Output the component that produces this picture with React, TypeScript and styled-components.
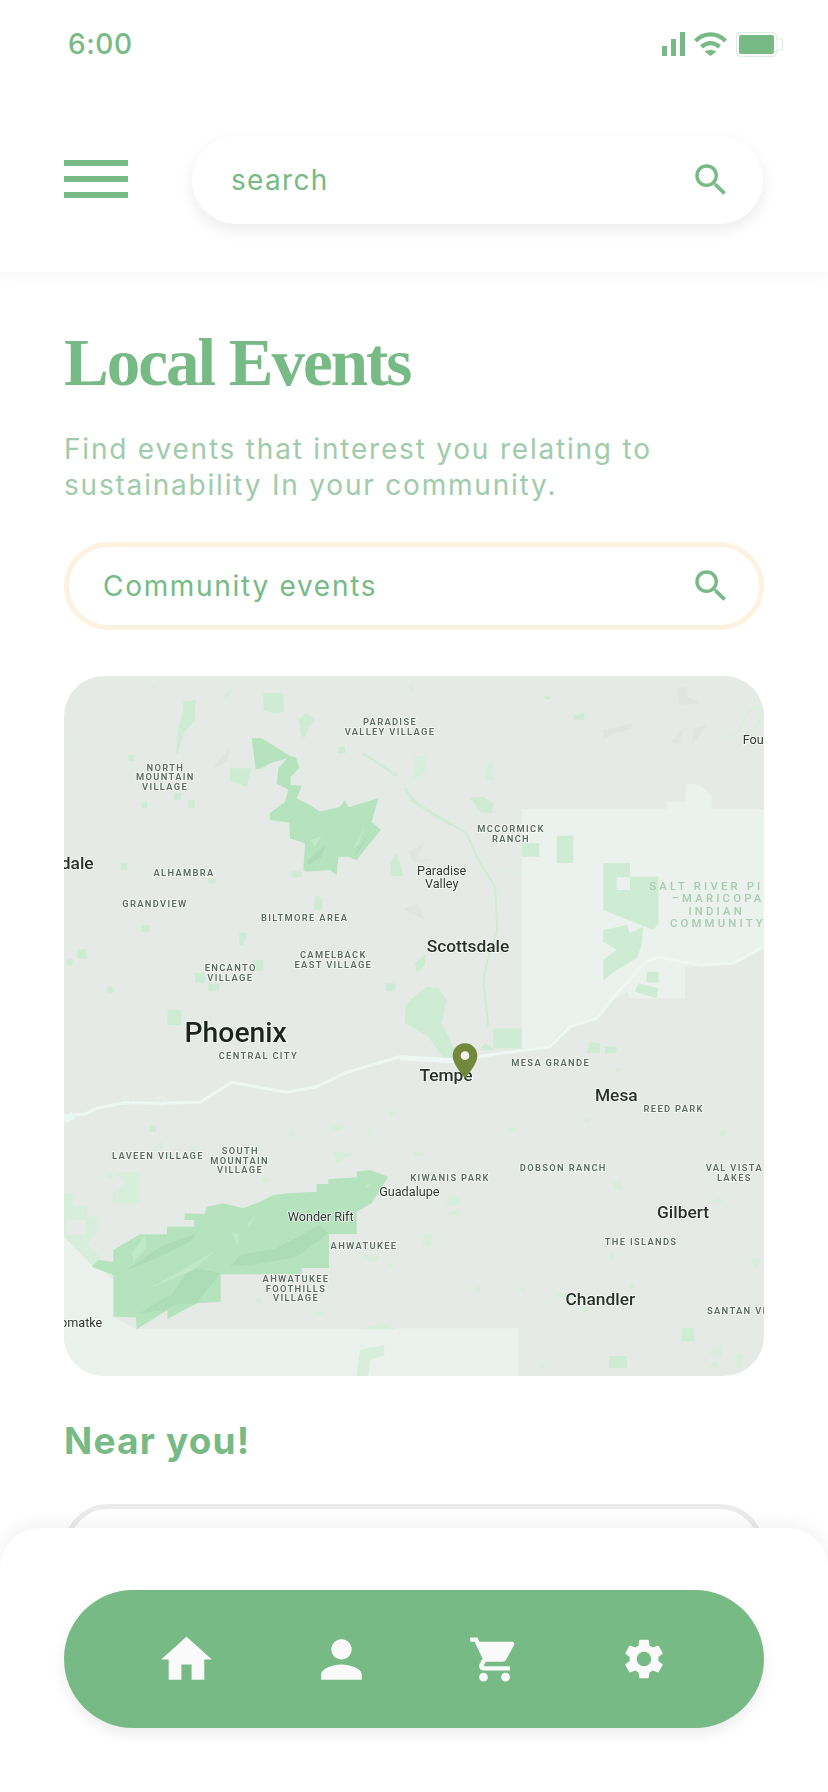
import React from "react";
import styled, { createGlobalStyle } from "styled-components";
import { MdHome, MdPerson, MdSearch, MdSettings, MdShoppingCart } from "react-icons/md";

const GREEN = "#77ba85";
const UI_FONT = `"Inter", "Open Sans", "Liberation Sans", sans-serif`;

const Global = createGlobalStyle`
  html, body { margin: 0; padding: 0; background: #fff; }
  * { box-sizing: border-box; }
`;

const Page = styled.div`
  position: relative;
  width: 828px;
  height: 1792px;
  overflow: hidden;
  background: #fff;
  font-family: ${UI_FONT};
  color: ${GREEN};
`;

const Header = styled.header`
  height: 272px;
  background: #fff;
  box-shadow: 0 2px 14px rgba(0, 0, 0, 0.05);
`;

const StatusBar = styled.div`
  height: 88px;
  padding: 0 45px 0 68px;
  display: flex;
  align-items: center;
  justify-content: space-between;
`;

const Clock = styled.span`
  font-size: 28px;
  font-weight: 500;
  letter-spacing: 0.6px;
  line-height: 1;
`;

const StatusIcons = styled.div`
  display: flex;
  align-items: center;
  gap: 9px;
`;

const Toolbar = styled.div`
  margin-top: 48px;
  padding: 0 65px 0 64px;
  display: flex;
  align-items: center;
  gap: 64px;
`;

const Burger = styled.div`
  width: 64px;
  margin-bottom: 2px;
  display: flex;
  flex-direction: column;
  gap: 10px;
  flex: none;
`;

const BurgerBar = styled.span`
  display: block;
  height: 6px;
  background: ${GREEN};
`;

const HeaderSearch = styled.div`
  flex: 1;
  height: 88px;
  border-radius: 44px;
  background: #fff;
  padding: 0 31px 0 39px;
  display: flex;
  align-items: center;
  justify-content: space-between;
  box-shadow: 0 6px 16px rgba(0, 0, 0, 0.08);
`;

const SearchLabel = styled.span<{ $spacing: number }>`
  font-size: 28px;
  letter-spacing: ${(p) => p.$spacing}px;
  line-height: 1;
`;

const Content = styled.main`
  padding: 46px 64px 0;
`;

const Title = styled.h1`
  margin: 0;
  font-family: "Liberation Serif", "Noto Serif", serif;
  font-size: 67px;
  font-weight: 700;
  line-height: 88px;
  letter-spacing: -2px;
`;

const Lead = styled.p`
  margin: 25px 0 0;
  font-size: 28px;
  line-height: 36px;
  letter-spacing: 1.8px;
  white-space: nowrap;
  color: #a0cbaa;
`;

const FieldBox = styled.div`
  margin-top: 39px;
  height: 88px;
  border-radius: 44px;
  border: 5px solid #fdf1e0;
  background: #fff;
  padding: 0 27px 0 34px;
  display: flex;
  align-items: center;
  justify-content: space-between;
`;

const MapFrame = styled.div`
  margin-top: 46px;
  width: 700px;
  height: 700px;
  border-radius: 40px;
  overflow: hidden;
  background: #e6eae6;
`;

const MapSvg = styled.svg`
  display: block;
  width: 700px;
  height: 700px;
  filter: blur(0.35px);
`;

const Place = styled.text<{ $size: number; $weight: number; $fill: string; $spacing: number; $halo: boolean }>`
  font-family: "Roboto", "Liberation Sans", sans-serif;
  font-size: ${(p) => p.$size}px;
  font-weight: ${(p) => p.$weight};
  fill: ${(p) => p.$fill};
  letter-spacing: ${(p) => p.$spacing}px;
  stroke: ${(p) => (p.$halo ? "rgba(255,255,255,0.75)" : "none")};
  stroke-width: 5px;
  paint-order: stroke;
`;

const Subhead = styled.h2`
  margin: 41px 0 0;
  font-size: 37px;
  font-weight: 700;
  line-height: 48px;
  letter-spacing: 1.2px;
`;

const NearCard = styled.div`
  margin-top: 39px;
  height: 88px;
  border-radius: 44px;
  border: 5px solid #ebebeb;
  background: #fff;
`;

const BottomSheet = styled.nav`
  position: absolute;
  left: 0;
  right: 0;
  top: 1528px;
  bottom: 0;
  border-radius: 40px 40px 0 0;
  background: #fff;
  box-shadow: 0 -4px 18px rgba(0, 0, 0, 0.06);
  padding: 62px 64px 0;
`;

const NavPill = styled.div`
  position: relative;
  height: 138px;
  border-radius: 69px;
  background: ${GREEN};
  box-shadow: 0 6px 14px rgba(0, 0, 0, 0.08);
`;

const NavSlot = styled.span<{ $left: number; $size: number }>`
  position: absolute;
  left: ${(p) => p.$left}px;
  top: 50%;
  width: ${(p) => p.$size}px;
  height: ${(p) => p.$size}px;
  margin: ${(p) => -p.$size / 2}px 0 0 ${(p) => -p.$size / 2}px;
  color: #fafafa;
  display: block;
`;

type Area = { q: number; d: string; fill: string };
type Label = { q: number; x: number; y: number; t: string; k: "s" | "c" | "m" | "l" | "t"; a?: "start" | "middle" | "end" };

const QUAD: [number, number][] = [
  [-14, -6],
  [336, -6],
  [-14, 364],
  [336, 364],
];

const PARK = "#b5e3bd";
const SOFT = "#cdecd3";
const FAINT = "#d8eedc";
const PALE = "#ebf1ec";
const RIDGE = "#abdcb5";
const LIT = "#bfe9c7";
const GRAY = "#e0e5e1";

const rect = (x: number, y: number, w: number, h: number) => `M${x} ${y}h${w}v${h}h${-w}z`;
const poly = (s: string) => `M${s}z`;

const AREAS: Area[] = [
  { q: 1, fill: PALE, d: poly("365 418 800 418 800 395 855 395 860 340 900 345 935 375 935 418 1092 418 1092 830 1000 880 855 890 855 985 690 985 680 965 640 990 590 1050 500 1070 440 1130 365 1135") },
  { q: 2, fill: PALE, d: poly("40 868 1270 868 1270 1010 40 1010") },
  { q: 3, fill: PALE, d: rect(-80, 865, 435, 145) },
  { q: 2, fill: PALE, d: poly("42 590 190 720 190 830 260 868 42 868") },
  { q: 2, fill: FAINT, d: poly("42 460 70 460 70 500 110 500 110 530 140 530 140 580 110 610 190 690 130 680 42 590") },
  { q: 2, fill: FAINT, d: poly("190 395 270 395 270 490 190 490 190 460 225 430 210 410") },
  { q: 2, fill: "#e6eae6", d: rect(48, 540, 60, 45) },

  { q: 0, fill: GRAY, d: poly("490 295 510 265 540 235 530 275") },
  { q: 0, fill: GRAY, d: poly("1065 720 1100 700 1125 750") },
  { q: 1, fill: GRAY, d: poly("610 180 695 160 695 175 610 205") },
  { q: 1, fill: GRAY, d: poly("830 55 860 50 862 80 900 100 835 105") },
  { q: 1, fill: GRAY, d: poly("812 218 848 175 842 222") },
  { q: 1, fill: GRAY, d: poly("878 175 920 165 878 225") },
  { q: 1, fill: GRAY, d: poly("12 715 55 705 75 752") },
  { q: 1, fill: GRAY, d: poly("25 545 75 515 50 565 110 570 40 578") },

  { q: 0, fill: PARK, d: poly("605 205 635 205 720 258 738 262 748 295 722 320 722 345 755 348 740 385 780 405 810 425 870 410 885 390 895 412 985 385 965 455 993 480 960 520 920 570 895 560 865 560 860 615 840 600 770 605 760 600 765 520 720 505 718 458 660 450 660 430 705 395 715 360 680 340 685 295 712 265 660 280 635 295 617 298") },
  { q: 0, fill: RIDGE, d: poly("770 575 825 525 815 560 775 585") },
  { q: 0, fill: RIDGE, d: poly("910 560 960 480 925 545") },
  { q: 0, fill: LIT, d: poly("910 535 945 465 925 525") },
  { q: 0, fill: LIT, d: poly("780 510 815 498 795 530") },

  { q: 0, fill: SOFT, d: poly("400 95 437 90 435 150 400 190 385 250 378 250 385 170 397 140") },
  { q: 0, fill: SOFT, d: poly("640 68 700 70 702 125 680 130 640 122") },
  { q: 0, fill: SOFT, d: poly("745 150 770 128 795 150 775 170 768 200 755 200") },
  { q: 0, fill: SOFT, d: poly("540 295 605 295 590 350 540 332") },
  { q: 0, fill: FAINT, d: poly("1095 258 1125 258 1125 310 1090 330") },
  { q: 0, fill: SOFT, d: poly("1022 580 1040 550 1062 618 1022 618") },
  { q: 0, fill: SOFT, d: poly("795 675 818 685 815 722 792 718") },
  { q: 0, fill: SOFT, d: poly("568 785 592 790 578 828 568 825") },
  { q: 0, fill: SOFT, d: poly("1095 880 1125 855 1125 885 1100 905") },
  { q: 0, fill: FAINT, d: poly("515 85 565 35 530 85") },
  { q: 0, fill: FAINT, d: poly("300 50 318 40 318 60") },
  { q: 0, fill: FAINT, d: poly("1070 45 1092 45 1090 70") },
  { q: 0, fill: SOFT, d: rect(235, 255, 18, 18) },
  { q: 0, fill: SOFT, d: rect(212, 580, 20, 20) },
  { q: 0, fill: SOFT, d: rect(272, 765, 26, 20) },
  { q: 0, fill: SOFT, d: rect(82, 838, 28, 28) },
  { q: 0, fill: SOFT, d: rect(50, 868, 18, 18) },
  { q: 0, fill: SOFT, d: rect(172, 950, 18, 18) },
  { q: 0, fill: SOFT, d: rect(352, 1020, 42, 45) },
  { q: 0, fill: SOFT, d: rect(865, 230, 20, 20) },
  { q: 0, fill: SOFT, d: rect(610, 870, 30, 32) },
  { q: 0, fill: SOFT, d: rect(435, 908, 30, 32) },
  { q: 0, fill: SOFT, d: rect(475, 940, 32, 24) },
  { q: 0, fill: SOFT, d: rect(475, 625, 22, 15) },
  { q: 0, fill: SOFT, d: rect(372, 368, 20, 22) },
  { q: 0, fill: SOFT, d: rect(414, 390, 20, 24) },
  { q: 0, fill: SOFT, d: rect(275, 395, 16, 18) },
  { q: 0, fill: SOFT, d: rect(725, 604, 30, 18) },
  { q: 0, fill: SOFT, d: rect(1008, 940, 28, 24) },

  { q: 1, fill: SOFT, d: poly("15 1030 20 1000 80 950 115 955 140 990 125 1060 160 1130 200 1160 130 1165 85 1100 15 1060") },
  { q: 1, fill: SOFT, d: rect(280, 1075, 85, 60) },
  { q: 1, fill: SOFT, d: rect(470, 497, 50, 82) },
  { q: 1, fill: SOFT, d: rect(365, 520, 53, 40) },
  { q: 1, fill: SOFT, d: poly("610 580 690 580 690 620 775 620 775 760 760 780 610 720") },
  { q: 1, fill: PALE, d: rect(650, 622, 40, 38) },
  { q: 1, fill: SOFT, d: poly("610 780 680 765 690 790 730 770 725 825 710 865 650 900 610 930 610 870 650 840 610 815") },
  { q: 1, fill: SOFT, d: rect(740, 905, 35, 32) },
  { q: 1, fill: SOFT, d: poly("705 965 715 940 775 955 770 985") },
  { q: 1, fill: SOFT, d: poly("560 1150 570 1115 600 1120 600 1150") },
  { q: 1, fill: SOFT, d: rect(615, 1130, 35, 20) },
  { q: 1, fill: SOFT, d: poly("240 1140 255 1120 285 1140") },
  { q: 1, fill: SOFT, d: poly("45 880 75 855 75 885 50 905") },
  { q: 1, fill: SOFT, d: poly("520 135 555 130 550 150 525 148") },
  { q: 1, fill: SOFT, d: poly("428 75 458 82 440 90") },
  { q: 1, fill: FAINT, d: poly("20 45 42 45 40 70") },
  { q: 1, fill: FAINT, d: poly("255 310 275 260 285 330 255 330") },
  { q: 1, fill: SOFT, d: poly("210 385 250 380 280 400 275 430 240 425") },

  { q: 2, fill: PARK, d: poly("125 680 145 660 190 665 190 630 270 583 350 583 352 560 433 560 433 540 403 540 405 520 465 522 470 500 520 490 580 505 630 485 670 465 715 460 800 455 800 432 835 432 835 418 920 412 920 395 960 390 1015 410 990 450 965 490 920 515 920 582 837 582 837 684 755 684 755 703 512 703 512 785 440 790 352 838 352 810 260 868 258 832 190 830 190 705") },
  { q: 2, fill: RIDGE, d: poly("230 690 330 620 440 580 420 605 330 650") },
  { q: 2, fill: RIDGE, d: poly("345 795 420 680 510 700 440 790") },
  { q: 2, fill: RIDGE, d: poly("540 680 570 645 680 625 810 555 835 580 740 650 640 670") },
  { q: 2, fill: RIDGE, d: poly("270 820 350 770 420 765 350 810") },
  { q: 2, fill: LIT, d: poly("295 748 500 630 430 690") },
  { q: 2, fill: LIT, d: poly("245 640 285 585 290 625 250 665") },
  { q: 2, fill: LIT, d: poly("590 555 620 520 600 560") },
  { q: 2, fill: LIT, d: poly("545 575 565 580 565 625") },
  { q: 2, fill: LIT, d: poly("945 440 965 425 950 445") },

  { q: 2, fill: SOFT, d: rect(297, 257, 20, 18) },
  { q: 2, fill: FAINT, d: rect(720, 268, 14, 24) },
  { q: 2, fill: FAINT, d: rect(952, 262, 14, 30) },
  { q: 2, fill: FAINT, d: poly("845 255 890 255 870 272 848 270") },
  { q: 2, fill: FAINT, d: poly("848 335 912 340 860 370") },
  { q: 2, fill: FAINT, d: poly("1020 210 1045 220 1020 232") },
  { q: 2, fill: FAINT, d: poly("1090 335 1122 345 1092 352") },
  { q: 2, fill: FAINT, d: poly("1122 582 1148 580 1140 620 1118 622") },
  { q: 2, fill: FAINT, d: poly("930 640 990 652 985 665 950 660") },
  { q: 2, fill: FAINT, d: poly("1010 672 1035 668 1022 690") },
  { q: 2, fill: FAINT, d: poly("615 782 630 770 638 798") },
  { q: 2, fill: FAINT, d: rect(798, 812, 20, 14) },
  { q: 2, fill: FAINT, d: poly("920 1010 930 930 1003 915 1003 945 960 960 955 1010") },
  { q: 2, fill: FAINT, d: poly("930 868 1000 848 1035 868") },
  { q: 2, fill: FAINT, d: rect(636, 412, 20, 16) },
  { q: 2, fill: FAINT, d: rect(420, 318, 20, 16) },
  { q: 2, fill: FAINT, d: poly("320 325 335 300 340 330") },
  { q: 2, fill: FAINT, d: poly("170 415 180 390 192 415") },

  { q: 3, fill: FAINT, d: poly("40 335 75 342 40 352") },
  { q: 3, fill: FAINT, d: poly("325 262 355 268 325 282") },
  { q: 3, fill: FAINT, d: rect(550, 235, 20, 14) },
  { q: 3, fill: FAINT, d: rect(958, 268, 18, 20) },
  { q: 3, fill: FAINT, d: poly("640 425 665 420 668 452 642 450") },
  { q: 3, fill: FAINT, d: poly("140 470 178 470 178 495 140 495") },
  { q: 3, fill: FAINT, d: poly("145 520 178 505 178 530") },
  { q: 3, fill: FAINT, d: poly("72 585 98 580 90 620 68 620") },
  { q: 3, fill: FAINT, d: poly("218 745 240 730 240 765") },
  { q: 3, fill: FAINT, d: rect(355, 742, 22, 12) },
  { q: 3, fill: FAINT, d: poly("685 732 708 730 698 752") },
  { q: 3, fill: FAINT, d: rect(468, 760, 32, 12) },
  { q: 3, fill: FAINT, d: rect(545, 800, 25, 15) },
  { q: 3, fill: SOFT, d: rect(846, 864, 36, 40) },
  { q: 3, fill: SOFT, d: rect(626, 948, 55, 36) },
  { q: 3, fill: FAINT, d: poly("925 940 965 912 965 950") },
  { q: 3, fill: FAINT, d: poly("925 982 945 962 965 982") },
  { q: 3, fill: FAINT, d: rect(1006, 940, 22, 42) },
  { q: 3, fill: FAINT, d: poly("1045 660 1088 655 1068 682") },
  { q: 3, fill: FAINT, d: poly("418 970 438 968 425 995") },
  { q: 3, fill: FAINT, d: poly("925 485 965 472 965 490") },
  { q: 3, fill: FAINT, d: poly("625 655 640 635 640 658") },
  { q: 3, fill: FAINT, d: poly("648 85 678 85 650 100") },
];

const RIVERS: { q: number; d: string; w: number; c: string }[] = [
  { q: 2, d: "M42 228L105 222 140 205 225 188 320 190 450 187 545 127 710 157 800 140 890 97 1050 50 1270 62", w: 9, c: "#eef7f4" },
  { q: 2, d: "M42 240L70 226", w: 22, c: "#e9f8f5" },
  { q: 2, d: "M225 168h26v22h-26zM318 172h26v24h-26z", w: 1, c: "#e9f8f5" },
  { q: 1, d: "M0 1166L150 1175 300 1150 450 1130 510 1070 590 1045 650 970 740 872 780 862 900 885 1000 880 1092 830", w: 9, c: "#eef7f4" },
  { q: 0, d: "M940 250L1045 320M1065 355L1100 400 1200 465", w: 6, c: SOFT },
  { q: 1, d: "M15 355L40 395 150 460 200 490 235 570 285 650 292 780 265 860 250 930 265 1070", w: 6, c: SOFT },
  { q: 1, d: "M250 585L300 600 365 615", w: 3, c: FAINT },
  { q: 0, d: "M42 200L92 240", w: 3, c: FAINT },
  { q: 1, d: "M985 200C1020 195 1030 160 1040 130 1050 115 1080 110 1088 120 1085 160 1060 180 1030 195", w: 6, c: FAINT },
];

const s = "s" as const;
const c = "c" as const;
const m = "m" as const;
const l = "l" as const;
const t = "t" as const;

const LABELS: Label[] = [
  { q: 0, x: 1020, y: 166, t: "PARADISE", k: s },
  { q: 0, x: 1020, y: 195, t: "VALLEY VILLAGE", k: s },
  { q: 0, x: 346, y: 302, t: "NORTH", k: s },
  { q: 0, x: 346, y: 331, t: "MOUNTAIN", k: s },
  { q: 0, x: 345, y: 360, t: "VILLAGE", k: s },
  { q: 0, x: 402, y: 618, t: "ALHAMBRA", k: s },
  { q: 0, x: 315, y: 712, t: "GRANDVIEW", k: s },
  { q: 0, x: 764, y: 754, t: "BILTMORE AREA", k: s },
  { q: 0, x: 850, y: 864, t: "CAMELBACK", k: s },
  { q: 0, x: 850, y: 893, t: "EAST VILLAGE", k: s },
  { q: 0, x: 542, y: 902, t: "ENCANTO", k: s },
  { q: 0, x: 541, y: 932, t: "VILLAGE", k: s },
  { q: 0, x: 625, y: 1167, t: "CENTRAL CITY", k: s },
  { q: 0, x: 131, y: 597, t: "dale", k: c, a: "end" },
  { q: 0, x: 557, y: 1116, t: "Phoenix", k: l },
  { q: 1, x: 125, y: 615, t: "Paradise", k: m },
  { q: 1, x: 125, y: 653, t: "Valley", k: m },
  { q: 1, x: 204, y: 846, t: "Scottsdale", k: c },
  { q: 1, x: 1028, y: 222, t: "Fou", k: m, a: "start" },
  { q: 1, x: 333, y: 486, t: "MCCORMICK", k: s },
  { q: 1, x: 333, y: 515, t: "RANCH", k: s },
  { q: 1, x: 748, y: 660, t: "SALT RIVER PI", k: t, a: "start" },
  { q: 1, x: 815, y: 697, t: "–MARICOPA", k: t, a: "start" },
  { q: 1, x: 950, y: 734, t: "INDIAN", k: t },
  { q: 1, x: 810, y: 770, t: "COMMUNITY", k: t, a: "start" },
  { q: 3, x: 452, y: 77, t: "MESA GRANDE", k: s },
  { q: 3, x: 138, y: 122, t: "Tempe", k: c },
  { q: 3, x: 649, y: 182, t: "Mesa", k: c },
  { q: 3, x: 821, y: 216, t: "REED PARK", k: s },
  { q: 3, x: 490, y: 393, t: "DOBSON RANCH", k: s },
  { q: 3, x: 150, y: 422, t: "KIWANIS PARK", k: s },
  { q: 2, x: 1078, y: 468, t: "Guadalupe", k: m },
  { q: 3, x: 1003, y: 394, t: "VAL VISTA", k: s },
  { q: 3, x: 1003, y: 423, t: "LAKES", k: s },
  { q: 3, x: 849, y: 535, t: "Gilbert", k: c },
  { q: 3, x: 723, y: 616, t: "THE ISLANDS", k: s },
  { q: 3, x: 601, y: 795, t: "Chandler", k: c },
  { q: 3, x: 921, y: 823, t: "SANTAN VI", k: s, a: "start" },
  { q: 2, x: 324, y: 358, t: "LAVEEN VILLAGE", k: s },
  { q: 2, x: 571, y: 342, t: "SOUTH", k: s },
  { q: 2, x: 569, y: 371, t: "MOUNTAIN", k: s },
  { q: 2, x: 570, y: 400, t: "VILLAGE", k: s },
  { q: 2, x: 812, y: 542, t: "Wonder Rift", k: m },
  { q: 2, x: 942, y: 626, t: "AHWATUKEE", k: s },
  { q: 2, x: 738, y: 726, t: "AHWATUKEE", k: s },
  { q: 2, x: 738, y: 755, t: "FOOTHILLS", k: s },
  { q: 2, x: 738, y: 784, t: "VILLAGE", k: s },
  { q: 2, x: 157, y: 862, t: "omatke", k: m, a: "end" },
];

const KINDS = {
  s: { size: 28, weight: 600, fill: "#5a6a60", spacing: 4, halo: true },
  m: { size: 38, weight: 400, fill: "#2f3731", spacing: 0, halo: true },
  c: { size: 52, weight: 500, fill: "#27302a", spacing: 0, halo: true },
  l: { size: 85, weight: 500, fill: "#1c241e", spacing: 0, halo: true },
  t: { size: 34, weight: 500, fill: "#a8ccb2", spacing: 9.5, halo: false },
};

const quadTransform = (q: number) => `translate(${QUAD[q][0]} ${QUAD[q][1]}) scale(${1 / 3})`;

const MapView = () => (
  <MapFrame>
    <MapSvg viewBox="0 0 700 700" role="img" aria-label="Map of the Phoenix area">
      {AREAS.map((a, i) => (
        <path key={i} d={a.d} fill={a.fill} transform={quadTransform(a.q)} />
      ))}
      {RIVERS.map((r, i) => (
        <path key={i} d={r.d} fill="none" stroke={r.c} strokeWidth={r.w} strokeLinejoin="round" transform={quadTransform(r.q)} />
      ))}
      {LABELS.map((b, i) => {
        const k = KINDS[b.k];
        return (
          <Place
            key={i}
            x={b.x}
            y={b.y}
            textAnchor={b.a ?? "middle"}
            transform={quadTransform(b.q)}
            $size={k.size}
            $weight={k.weight}
            $fill={k.fill}
            $spacing={k.spacing}
            $halo={k.halo}
          >
            {b.t}
          </Place>
        );
      })}
      <g transform={quadTransform(3)}>
        <path d="M195 10C173 10 158 27 158 47C158 72 183 98 195 115C207 98 232 72 232 47C232 27 217 10 195 10Z" fill="#74883c" />
        <circle cx="195" cy="47" r="13" fill="#f4f6ee" />
      </g>
    </MapSvg>
  </MapFrame>
);

const SignalIcon = () => (
  <svg width="23" height="24" viewBox="0 0 23 24" fill={GREEN}>
    <rect x="0" y="14" width="5" height="10" />
    <rect x="9" y="7" width="5" height="17" />
    <rect x="18" y="0" width="5" height="24" />
  </svg>
);

const WifiIcon = () => (
  <svg width="33" height="24" viewBox="0 0 33 24" fill="none" stroke={GREEN} strokeWidth="4.2">
    <path d="M1.5 9C9.8 0.2 23.2 0.2 31.5 9" />
    <path d="M7.5 15C12.8 9.8 20.2 9.8 25.5 15" />
    <path d="M10.5 19.5C13.8 17.4 19.2 17.4 22.5 19.5L16.5 24Z" fill={GREEN} stroke="none" />
  </svg>
);

const BatteryIcon = () => (
  <svg width="47" height="25" viewBox="0 0 47 25">
    <rect x="0.6" y="0.6" width="39.8" height="23.8" rx="4" fill="#fff" stroke="#deeee2" strokeWidth="1.2" />
    <path d="M40.5 7H46.4V18H40.5" fill="#fff" stroke="#deeee2" strokeWidth="1.2" />
    <rect x="3" y="3" width="35" height="19" rx="2" fill={GREEN} />
  </svg>
);

export default function App() {
  return (
    <Page>
      <Global />
      <Header>
        <StatusBar>
          <Clock>6:00</Clock>
          <StatusIcons>
            <SignalIcon />
            <WifiIcon />
            <BatteryIcon />
          </StatusIcons>
        </StatusBar>
        <Toolbar>
          <Burger>
            <BurgerBar />
            <BurgerBar />
            <BurgerBar />
          </Burger>
          <HeaderSearch>
            <SearchLabel $spacing={1.3}>search</SearchLabel>
            <MdSearch size={42} color={GREEN} />
          </HeaderSearch>
        </Toolbar>
      </Header>
      <Content>
        <Title>Local Events</Title>
        <Lead>
          Find events that interest you relating to
          <br />
          sustainability In your community.
        </Lead>
        <FieldBox>
          <SearchLabel $spacing={1.7}>Community events</SearchLabel>
          <MdSearch size={42} color={GREEN} />
        </FieldBox>
        <MapView />
        <Subhead>Near you!</Subhead>
        <NearCard />
      </Content>
      <BottomSheet>
        <NavPill>
          <NavSlot $left={122} $size={61}><MdHome size={61} /></NavSlot>
          <NavSlot $left={277} $size={61}><MdPerson size={61} /></NavSlot>
          <NavSlot $left={430} $size={53}><MdShoppingCart size={53} /></NavSlot>
          <NavSlot $left={580} $size={48}><MdSettings size={48} /></NavSlot>
        </NavPill>
      </BottomSheet>
    </Page>
  );
}
